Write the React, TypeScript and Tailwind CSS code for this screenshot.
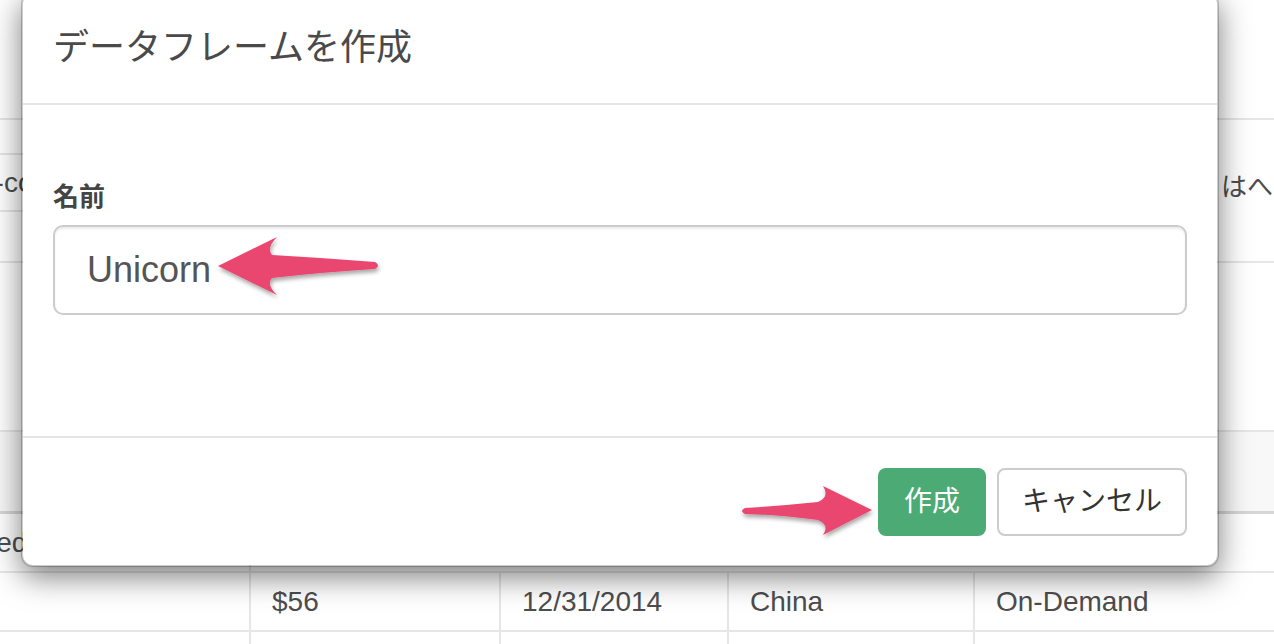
import React from "react";

// Background table columns (px) sitting behind the modal.
const COLS = [251, 250, 228, 246, 299];
const ROW = ["", "$56", "12/31/2014", "China", "On-Demand"];

const FONT = "font-['Liberation_Sans','Noto_Sans_CJK_JP',sans-serif]";

function Cells({ values, h }: { values: string[]; h: string }) {
  return (
    <div className={`flex ${h} border-b-2 border-[#e6e6e6]`}>
      {COLS.map((w, i) => (
        <div
          key={i}
          style={{ width: w }}
          className={`flex items-center pl-[21px] text-[28px] text-[#4d4d4d] whitespace-nowrap overflow-hidden ${
            i < COLS.length - 1 ? "border-r-2 border-[#e6e6e6]" : ""
          }`}
        >
          {values[i]}
        </div>
      ))}
    </div>
  );
}

function Arrows() {
  return (
    <svg
      className="absolute inset-0 pointer-events-none"
      width="1274"
      height="644"
      viewBox="0 0 1274 644"
    >
      <defs>
        <filter id="arrowShadow" x="-20%" y="-50%" width="140%" height="200%">
          <feDropShadow dx="1" dy="3" stdDeviation="2" floodColor="#000" floodOpacity="0.35" />
        </filter>
      </defs>
      <g fill="#ea4670" filter="url(#arrowShadow)">
        {/* left-pointing arrow at the input text */}
        <path d="M218 266 L277 237 Q266 248 272 255 Q325 258 375 262 Q381 265.5 375 269 Q325 272 272 278 Q266 285 277 295 Z" />
        {/* right-pointing arrow at the create button */}
        <path d="M872 510 L823 486 Q830 497 818 502 Q780 506 745 508 Q739 511 745 514 Q780 515 818 520 Q830 525 823 535 Z" />
      </g>
    </svg>
  );
}

export default function App() {
  return (
    <div className={`relative w-[1274px] h-[644px] overflow-hidden bg-white ${FONT}`}>
      {/* Page content behind the modal */}
      <div className="flex flex-col">
        <div className="h-[120px] border-b-2 border-[#e6e6e6]" />
        <div className="flex h-[143px] border-b-2 border-[#e6e6e6]">
          <div className="w-[251px] flex flex-col">
            <div className="h-[35px] border-b-2 border-[#e6e6e6]" />
            <div className="h-[57px] border-b-2 border-[#e6e6e6] flex items-center overflow-hidden text-[28px] text-[#4d4d4d] whitespace-nowrap">
              <span className="ml-[-21px]">e-commerce</span>
            </div>
            <div className="flex-1" />
          </div>
          <div className="flex-1" />
          <div className="w-[55px] overflow-hidden whitespace-nowrap pt-[48px] pl-[2px] text-[26px] text-[#4d4d4d]">
            はへの
          </div>
        </div>
        <div className="h-[169px] border-b-2 border-[#e6e6e6]" />
        <div className="h-[82px] bg-[#f8f8f8] border-b-[3px] border-[#d6d6d6]" />
        <div className="flex h-[59px] border-b-2 border-[#e6e6e6]">
          <div className="w-[251px] flex items-center overflow-hidden whitespace-nowrap border-r-2 border-[#e6e6e6] text-[28px] text-[#4d4d4d]">
            <span className="ml-[-24px]">Cedar</span>
          </div>
        </div>
        <Cells values={ROW} h="h-[59px]" />
        <Cells values={["", "", "", "", ""]} h="h-[59px]" />
      </div>

      {/* Modal */}
      <div className="absolute left-[21px] top-[-8px] w-[1198px] rounded-[12px] border-2 border-[rgba(0,0,0,0.2)] bg-white bg-clip-padding shadow-[0_10px_30px_rgba(0,0,0,0.5)]">
        <div className="px-[30px] pt-[28px] pb-[30px] border-b-2 border-[#e5e5e5]">
          <h4 className="h-[51px] leading-[51px] text-[36px] text-[#4a4a4a] font-normal">
            データフレームを作成
          </h4>
        </div>

        <div className="h-[331px] px-[30px] pt-[72px]">
          <label className="block h-[40px] leading-[40px] text-[26px] font-bold text-[#444] mb-[8px]">
            名前
          </label>
          <div className="h-[90px] flex items-center rounded-[10px] border-2 border-[#cccccc] px-[32px] text-[36px] text-[#555] shadow-[inset_0_2px_2px_rgba(0,0,0,0.075)]">
            Unicorn
          </div>
        </div>

        <div className="border-t-2 border-[#e5e5e5] px-[30px] pt-[30px] pb-[29px] flex justify-end gap-[11px]">
          <button className="h-[68px] px-[26px] rounded-[8px] bg-[#4caa74] text-white text-[28px] leading-none">
            作成
          </button>
          <button className="h-[68px] px-[23px] rounded-[8px] border-2 border-[#cccccc] bg-white text-[#333] text-[28px] leading-none">
            キャンセル
          </button>
        </div>
      </div>

      <Arrows />
    </div>
  );
}
